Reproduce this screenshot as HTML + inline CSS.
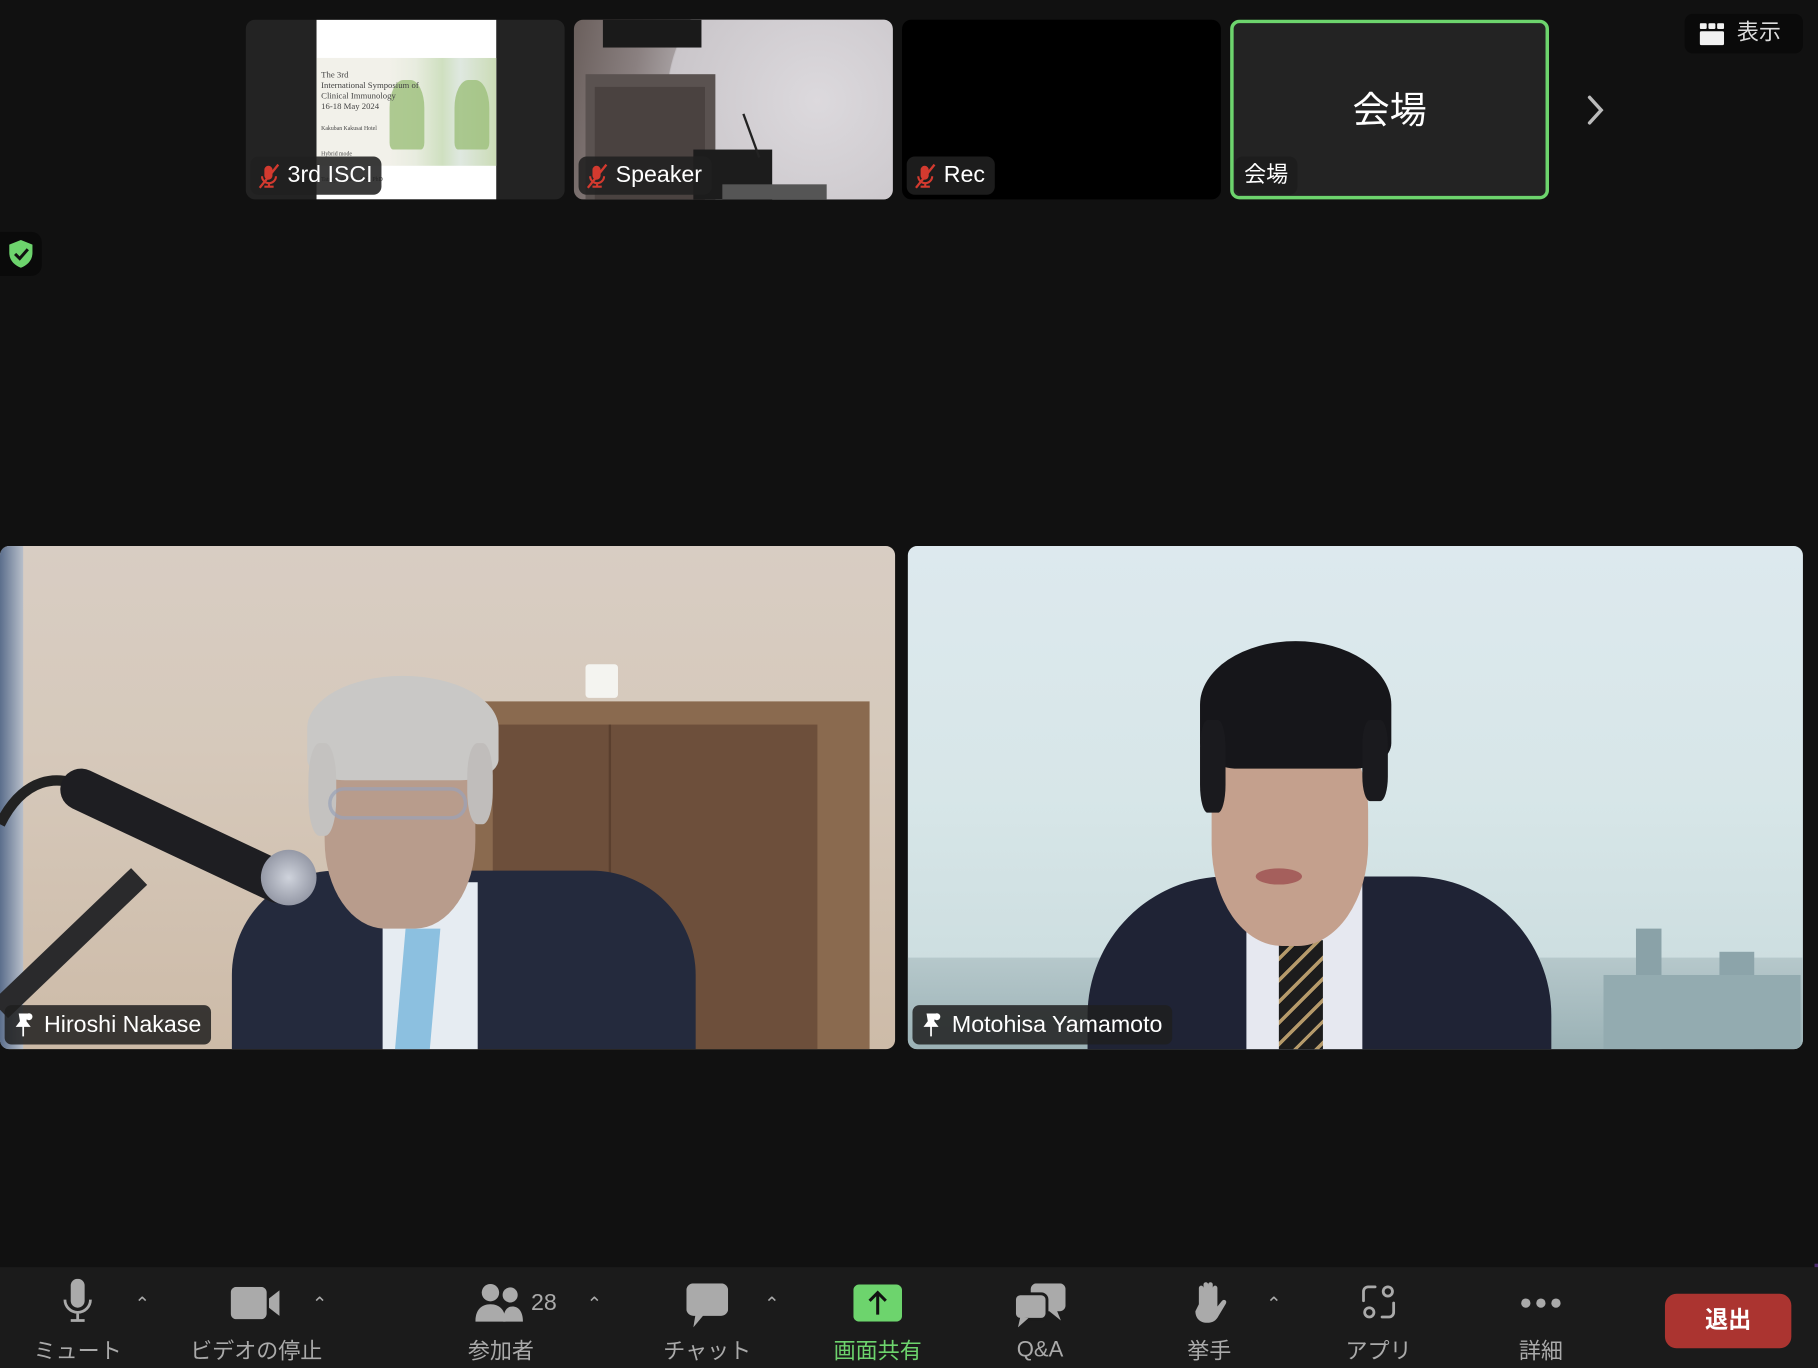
<!DOCTYPE html>
<html><head><meta charset="utf-8">
<style>
*{margin:0;padding:0;box-sizing:border-box}
html,body{width:1818px;height:1368px;overflow:hidden;background:#111}
body{font-family:"Liberation Sans","Noto Sans CJK JP",sans-serif}
#w{position:absolute;left:0;top:0;width:1568px;height:1180px;transform:scale(1.15944,1.15932);transform-origin:0 0;background:#111}
.a{position:absolute}
.tile{position:absolute;top:17px;height:155px;width:275px;border-radius:8px;overflow:hidden;background:#232323}
.lbl{position:absolute;left:4px;bottom:4px;height:33px;border-radius:7px;background:rgba(32,32,32,.88);color:#fff;font-size:20px;line-height:33px;padding:0 8px 0 32px;white-space:nowrap}
.lbl svg{position:absolute;left:6px;top:6px}
.vid{position:absolute;top:471px;height:434px;width:772px;border-radius:8px;overflow:hidden}
.name{position:absolute;left:4px;bottom:4px;height:34px;border-radius:6px;background:rgba(30,30,30,.85);color:#fff;font-size:20px;line-height:34px;padding:0 8px 0 34px;white-space:nowrap}
.name svg{position:absolute;left:7px;top:6px}
.tb{position:absolute;left:0;top:1093px;width:1568px;height:87px;background:#1b1b1b}
.it{position:absolute;top:0;width:120px;text-align:center;color:#aaa}
.it .t{position:absolute;top:58px;left:0;width:100%;font-size:19px}
.it svg{position:absolute;top:10px}
.car{position:absolute;top:22px;color:#aaa;font-size:16px}
</style></head><body><div id="w">

<div class="tile" style="left:212px">
  <div class="a" style="left:61px;top:0;width:155px;height:155px;background:#fff"></div>
  <div class="a" style="left:61px;top:33px;width:155px;height:93px;background:linear-gradient(90deg,#f2f1ea 0 40%,#e8ecdf 55%,#cfe0c0 70%,#dfe8e0 80%,#cbdcb6 100%)"></div>
  <div class="a" style="left:124px;top:52px;width:30px;height:60px;background:#9cbf7a;border-radius:40% 40% 10% 10%;opacity:.8"></div>
  <div class="a" style="left:180px;top:52px;width:30px;height:60px;background:#9cbf7a;border-radius:40% 40% 10% 10%;opacity:.8"></div>
  <div class="a" style="left:65px;top:43px;font-family:'Liberation Serif',serif;font-size:7.5px;line-height:9px;color:#444">The 3rd<br>International Symposium of<br>Clinical Immunology<br>16-18 May 2024<br><br><span style="font-size:5px">Kakuban Kakusai Hotel<br><br>Hybrid mode<br><br>Tatsuya Atsumi, MD, PhD</span></div>
  <div class="lbl"><svg width="20" height="22" viewBox="0 0 20 22"><rect x="6" y="2" width="7" height="12" rx="3.5" fill="#d33a2f"/><path d="M4 11a6 6 0 0 0 12 0M10 17v3M6 20h8" stroke="#d33a2f" stroke-width="1.8" fill="none"/><path d="M2 21L18 1" stroke="#d33a2f" stroke-width="2"/></svg>3rd ISCI</div>
</div>
<div class="tile" style="left:495px;background:linear-gradient(100deg,#6a5f5c 0%,#8a8080 20%,#c9c6c9 45%,#d6d3d7 70%,#b3adb0 100%)">
  <div class="a" style="left:80px;top:-60px;width:260px;height:260px;border-radius:50%;background:radial-gradient(#dcd9dd,#cac6ca 70%,transparent 72%)"></div>
  <div class="a" style="left:10px;top:47px;width:112px;height:108px;background:#5a5250"></div>
  <div class="a" style="left:18px;top:58px;width:95px;height:97px;background:#4a4240"></div>
  <div class="a" style="left:25px;top:0;width:85px;height:24px;background:#1a1a1a"></div>
  <div class="a" style="left:103px;top:112px;width:68px;height:43px;background:#1c1c1c"></div>
  <div class="a" style="left:128px;top:142px;width:90px;height:13px;background:#555"></div>
  <div class="a" style="left:152px;top:80px;width:2px;height:40px;background:#222;transform:rotate(-20deg)"></div>
  <div class="lbl"><svg width="20" height="22" viewBox="0 0 20 22"><rect x="6" y="2" width="7" height="12" rx="3.5" fill="#d33a2f"/><path d="M4 11a6 6 0 0 0 12 0M10 17v3M6 20h8" stroke="#d33a2f" stroke-width="1.8" fill="none"/><path d="M2 21L18 1" stroke="#d33a2f" stroke-width="2"/></svg>Speaker</div>
</div>
<div class="tile" style="left:778px;background:#000">
  <div class="lbl"><svg width="20" height="22" viewBox="0 0 20 22"><rect x="6" y="2" width="7" height="12" rx="3.5" fill="#d33a2f"/><path d="M4 11a6 6 0 0 0 12 0M10 17v3M6 20h8" stroke="#d33a2f" stroke-width="1.8" fill="none"/><path d="M2 21L18 1" stroke="#d33a2f" stroke-width="2"/></svg>Rec</div>
</div>
<div class="tile" style="left:1061px;border:3px solid #6dd46d;background:#232323">
  <div class="a" style="left:0;top:55px;width:100%;text-align:center;color:#fff;font-size:32px;line-height:40px">会場</div>
  <div class="lbl" style="left:1px;bottom:1px;padding:0 8px;background:#1d1d1d;font-size:19px">会場</div>
</div>
<svg class="a" style="left:1366px;top:80px" width="20" height="30" viewBox="0 0 20 30"><path d="M5 4l10 11L5 26" stroke="#bbb" stroke-width="3" fill="none" stroke-linecap="round"/></svg>

<div class="a" style="left:1453px;top:12px;width:102px;height:34px;border-radius:7px;background:#0a0a0a;color:#ddd;font-size:19px;line-height:34px;padding-left:45px">表示</div>
<svg class="a" style="left:1466px;top:20px" width="21" height="19" viewBox="0 0 21 19"><rect x="0" y="0" width="6" height="5" rx="1" fill="#f2f2f2"/><rect x="7.5" y="0" width="6" height="5" rx="1" fill="#f2f2f2"/><rect x="15" y="0" width="6" height="5" rx="1" fill="#f2f2f2"/><rect x="0" y="7" width="21" height="12" rx="1.5" fill="#f2f2f2"/></svg>

<div class="a" style="left:0;top:200px;width:36px;height:38px;border-radius:0 9px 9px 0;background:#0a0a0a"></div>
<svg class="a" style="left:6px;top:206px" width="24" height="26" viewBox="0 0 24 26"><path d="M12 1L22 5v7c0 7-5 11-10 13C7 23 2 19 2 12V5z" fill="#6dd46d"/><path d="M7 13l4 4 7-8" stroke="#111" stroke-width="2.6" fill="none"/></svg>

<div class="vid" style="left:0;background:linear-gradient(180deg,#d8cdc3 0%,#d6c9bb 40%,#cdbba8 100%)">
  <div class="a" style="left:0;top:0;width:20px;height:434px;background:linear-gradient(90deg,#5b6e8c,#b8bfca)"></div>
  <div class="a" style="left:395px;top:134px;width:355px;height:300px;background:#8a6a4f"></div>
  <div class="a" style="left:425px;top:154px;width:280px;height:280px;background:#6d4f3b"></div>
  <div class="a" style="left:525px;top:154px;width:2px;height:280px;background:#5a3f2e"></div>
  <div class="a" style="left:505px;top:102px;width:28px;height:29px;background:#f4f4f0;border-radius:3px"></div>
  <div class="a" style="left:200px;top:280px;width:400px;height:200px;background:#242a3d;border-radius:90px 90px 0 0"></div>
  <div class="a" style="left:330px;top:290px;width:82px;height:150px;background:#e6ecf2"></div>
  <div class="a" style="left:345px;top:330px;width:30px;height:110px;background:#8cc0e0;transform:skewX(-5deg)"></div>
  <div class="a" style="left:280px;top:140px;width:130px;height:190px;background:#b89c8c;border-radius:45% 45% 40% 40%"></div>
  <div class="a" style="left:265px;top:112px;width:165px;height:90px;background:#c9c8c6;border-radius:50% 50% 20% 20%"></div>
  <div class="a" style="left:266px;top:170px;width:24px;height:80px;background:#c4c2c0;border-radius:40%"></div>
  <div class="a" style="left:403px;top:170px;width:22px;height:70px;background:#c0bdbb;border-radius:40%"></div>
  <div class="a" style="left:283px;top:208px;width:120px;height:28px;border:3px solid #9aa3b8;border-radius:14px;opacity:.7"></div>
  <svg class="a" style="left:0;top:0" width="300" height="434" viewBox="0 0 300 434"><path d="M0 240C20 200 50 195 75 210" stroke="#222" stroke-width="9" fill="none"/><path d="M70 210L240 290" stroke="#1e1e22" stroke-width="36" stroke-linecap="round"/><path d="M120 285L0 400" stroke="#2a2a2c" stroke-width="20"/></svg>
  <div class="a" style="left:225px;top:262px;width:48px;height:48px;background:radial-gradient(#cfd3dc,#7d8190);border-radius:50%"></div>
  <div class="name"><svg width="20" height="22" viewBox="0 0 20 22"><circle cx="14" cy="4" r="3" fill="#fff"/><path d="M6 2h6l-1 6 3 4H4l3-4z M9 12v9" fill="#fff" stroke="#fff" stroke-width="1.5"/></svg>Hiroshi Nakase</div>
</div>

<div class="vid" style="left:783px;background:linear-gradient(180deg,#dde9ee 0%,#d7e6e8 50%,#c8dadc 100%)">
  <div class="a" style="left:0;top:355px;width:772px;height:79px;background:linear-gradient(180deg,#b6c8cb,#9bb2b6)"></div>
  <div class="a" style="left:628px;top:330px;width:22px;height:104px;background:#8aa2a8"></div>
  <div class="a" style="left:700px;top:350px;width:30px;height:84px;background:#8ca4aa"></div>
  <div class="a" style="left:600px;top:370px;width:170px;height:64px;background:#93abb0"></div>
  <div class="a" style="left:155px;top:285px;width:400px;height:160px;background:#1f2335;border-radius:120px 120px 0 0"></div>
  <div class="a" style="left:292px;top:280px;width:100px;height:160px;background:#e6e8f0"></div>
  <div class="a" style="left:320px;top:340px;width:38px;height:100px;background:repeating-linear-gradient(135deg,#1c1c1c 0 10px,#b59a6a 10px 13px)"></div>
  <div class="a" style="left:262px;top:150px;width:135px;height:195px;background:#c4a08d;border-radius:40% 40% 45% 45%"></div>
  <div class="a" style="left:252px;top:82px;width:165px;height:110px;background:#16161a;border-radius:50% 50% 20% 20%"></div>
  <div class="a" style="left:252px;top:150px;width:22px;height:80px;background:#1a1a1e;border-radius:30%"></div>
  <div class="a" style="left:392px;top:150px;width:22px;height:70px;background:#1a1a1e;border-radius:30%"></div>
  <div class="a" style="left:300px;top:278px;width:40px;height:14px;background:#a55f5c;border-radius:50%"></div>
  <div class="name"><svg width="20" height="22" viewBox="0 0 20 22"><circle cx="14" cy="4" r="3" fill="#fff"/><path d="M6 2h6l-1 6 3 4H4l3-4z M9 12v9" fill="#fff" stroke="#fff" stroke-width="1.5"/></svg>Motohisa Yamamoto</div>
</div>

<div class="a" style="left:1565px;top:1090px;width:3px;height:90px;background:#4a2a6a"></div>

<div class="tb">
  <div class="it" style="left:7px"><svg style="left:47px" width="26" height="40" viewBox="0 0 26 40"><rect x="7" y="0" width="12" height="25" rx="6" fill="#aaa"/><path d="M2 18a11 11 0 0 0 22 0M13 29v6M7 36h12" stroke="#aaa" stroke-width="2.4" fill="none"/></svg><div class="t">ミュート</div></div>
  <div class="car" style="left:116px">&#8963;</div>
  <div class="it" style="left:161px"><svg style="left:38px;top:17px" width="44" height="28" viewBox="0 0 44 28"><rect x="0" y="0" width="31" height="28" rx="5" fill="#aaa"/><path d="M33 10l9-7v22l-9-7z" fill="#aaa"/></svg><div class="t">ビデオの停止</div></div>
  <div class="car" style="left:269px">&#8963;</div>
  <div class="it" style="left:372px"><svg style="left:38px;top:14px" width="44" height="34" viewBox="0 0 44 34"><circle cx="13" cy="8" r="7.5" fill="#aaa"/><path d="M0 33c0-10 5-15 13-15s13 5 13 15z" fill="#aaa"/><circle cx="30" cy="10" r="6.5" fill="#aaa"/><path d="M24 33c0-9 3-13 8-13s9 4 9 13z" fill="#aaa"/></svg><div class="a" style="left:86px;top:20px;font-size:20px">28</div><div class="t">参加者</div></div>
  <div class="car" style="left:506px">&#8963;</div>
  <div class="it" style="left:550px"><svg style="left:42px;top:14px" width="36" height="38" viewBox="0 0 36 38"><rect x="0" y="0" width="36" height="28" rx="6" fill="#aaa"/><path d="M8 26l-2 12 10-12z" fill="#aaa"/></svg><div class="t">チャット</div></div>
  <div class="car" style="left:659px">&#8963;</div>
  <div class="it" style="left:697px;color:#6dd46d"><svg style="left:39px;top:15px" width="42" height="32" viewBox="0 0 42 32"><rect x="0" y="0" width="42" height="32" rx="5" fill="#6dd46d"/><path d="M21 26V7M14 14l7-7 7 7" stroke="#111" stroke-width="2.6" fill="none"/></svg><div class="t">画面共有</div></div>
  <div class="it" style="left:837px"><svg style="left:38px;top:14px" width="44" height="38" viewBox="0 0 44 38"><rect x="14" y="0" width="30" height="24" rx="5" fill="#aaa"/><path d="M36 22l4 10-10-8z" fill="#aaa"/><rect x="0" y="9" width="28" height="22" rx="5" fill="#aaa" stroke="#1b1b1b" stroke-width="2.5"/><path d="M5 29l-2 9 9-8z" fill="#aaa"/></svg><div class="t" style="top:61px">Q&amp;A</div></div>
  <div class="it" style="left:983px"><svg style="left:45px;top:12px" width="32" height="38" viewBox="0 0 32 38"><path d="M6 20V6a2 2 0 0 1 4 0v10V3a2 2 0 0 1 4 0v13V3a2 2 0 0 1 4 0v13V6a2 2 0 0 1 4 0v16l4-5c2-2 5 0 3 3l-6 10c-2 4-5 6-10 6-6 0-10-4-10-10z" fill="#aaa"/></svg><div class="t">挙手</div></div>
  <div class="car" style="left:1092px">&#8963;</div>
  <div class="it" style="left:1129px"><svg style="left:45px;top:14px" width="30" height="32" viewBox="0 0 30 32"><path d="M12 3H6a4 4 0 0 0-4 4v8M18 29h6a4 4 0 0 0 4-4V17" stroke="#aaa" stroke-width="2.4" fill="none" stroke-linecap="round"/><circle cx="23" cy="7" r="4" stroke="#aaa" stroke-width="2.4" fill="none"/><circle cx="7" cy="25" r="4" stroke="#aaa" stroke-width="2.4" fill="none"/></svg><div class="t">アプリ</div></div>
  <div class="it" style="left:1269px"><svg style="left:42px;top:26px" width="36" height="10" viewBox="0 0 36 10"><circle cx="5" cy="5" r="4" fill="#aaa"/><circle cx="18" cy="5" r="4" fill="#aaa"/><circle cx="31" cy="5" r="4" fill="#aaa"/></svg><div class="t">詳細</div></div>
  <div class="a" style="left:1436px;top:23px;width:109px;height:47px;border-radius:10px;background:#ab3430;color:#fff;font-size:20px;font-weight:bold;line-height:47px;text-align:center">退出</div>
</div>

</div></body></html>
